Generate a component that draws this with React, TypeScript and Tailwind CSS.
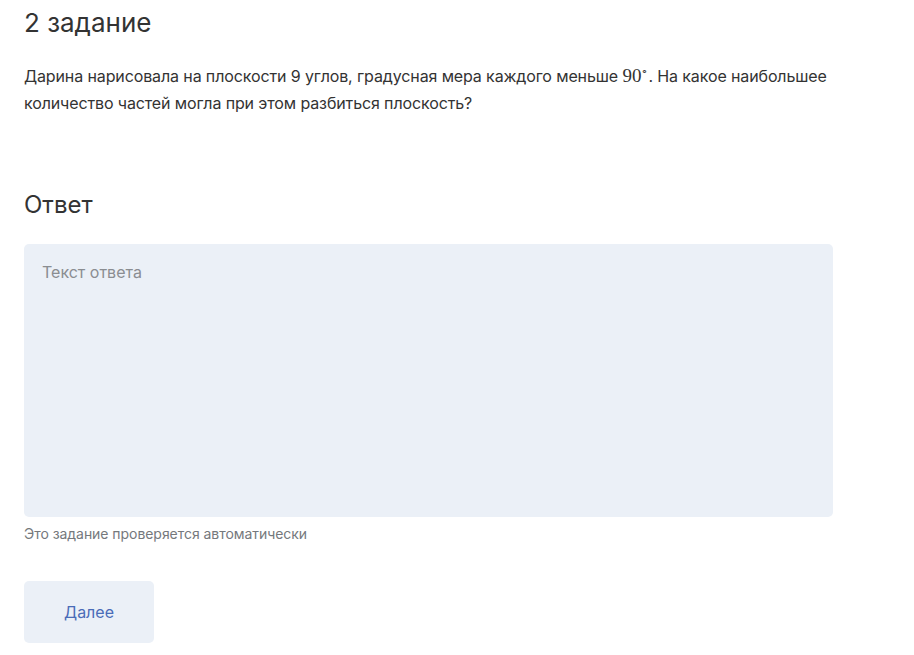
export default function App() {
  return (
    <div className="min-h-screen bg-white font-['Inter',sans-serif] text-[#333333]">
      <div className="px-6 pt-[7px] w-[890px]">
        <h2 className="text-[26px] leading-[32px] font-normal text-[#333]">2 задание</h2>
        <p className="mt-[24px] text-[16px] leading-[27px] tracking-[-0.12px] text-[#333]">
          Дарина нарисовала на плоскости 9 углов, градусная мера каждого меньше{" "}
          <span className="font-['Liberation_Serif',serif] text-[19px] leading-none tracking-normal">
            90<span className="align-super text-[11px] leading-none">∘</span>
          </span>
          . На какое наибольшее
          <br />
          количество частей могла при этом разбиться плоскость?
        </p>
        <h3 className="mt-[73px] text-[24px] leading-[30px] font-normal text-[#333]">Ответ</h3>
        <textarea
          placeholder="Текст ответа"
          className="mt-[24px] block w-[809px] h-[273px] resize-none rounded-[5px] bg-[#ebf0f7] px-[18px] py-[17px] text-[16px] leading-[22px] text-[#333] placeholder:text-[#8a8d91] outline-none"
        />
        <div className="mt-[8px] text-[14px] leading-[18px] tracking-[-0.05px] text-[#75787c]">
          Это задание проверяется автоматически
        </div>
        <button className="mt-[38px] w-[130px] h-[62px] rounded-[5px] bg-[#ebf0f7] text-[16px] text-[#4a6cb8]">
          Далее
        </button>
      </div>
    </div>
  );
}
